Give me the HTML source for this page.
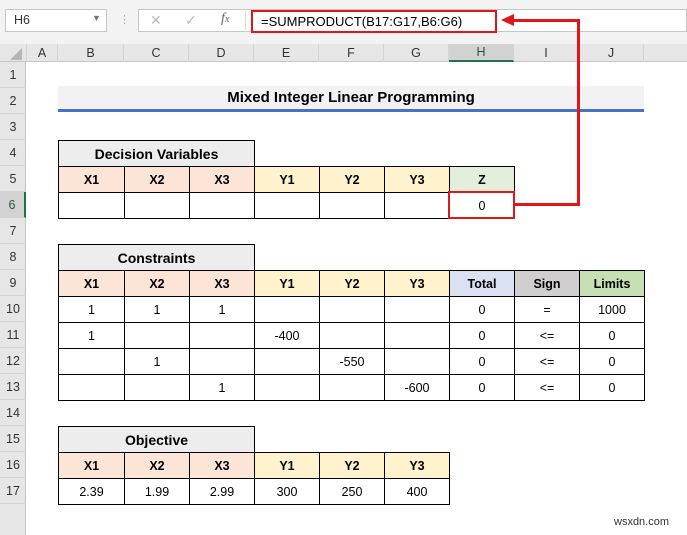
<!DOCTYPE html>
<html><head><meta charset="utf-8"><style>
*{box-sizing:border-box;margin:0;padding:0}
body{width:687px;height:535px;overflow:hidden;background:#fff;font-family:"Liberation Sans",Arial,sans-serif;font-size:12.5px;color:#000;position:relative}
.a{position:absolute}
.c{position:absolute;border:1px solid #000;display:flex;align-items:center;justify-content:center;height:27px}
.b{font-weight:bold}
.ch{position:absolute;top:44px;height:18px;border-right:1px solid #d4d4d4;display:flex;align-items:center;justify-content:center;color:#333;font-size:12.5px}
.rh{position:absolute;left:0;width:26px;height:26px;border-bottom:1px solid #d4d4d4;display:flex;align-items:center;justify-content:center;color:#333;font-size:12.5px}
.x{background:#fce4d6}.y{background:#fff2cc}
</style></head><body>
<!-- toolbar -->
<div class="a" style="left:0;top:0;width:687px;height:44px;background:#f3f3f3"></div>
<div class="a" style="left:5px;top:9px;width:102px;height:23px;background:#fff;border:1px solid #c6c6c6;padding:3px 8px;color:#333">H6</div>
<div class="a" style="left:92px;top:13px;color:#777;font-size:9px">▼</div>
<div class="a" style="left:119px;top:13px;color:#aaa;font-size:11px">⋮</div>
<div class="a" style="left:138px;top:9px;width:549px;height:23px;background:#fff;border:1px solid #c6c6c6"></div>
<div class="a" style="left:150px;top:12px;color:#bbb;font-size:14px">✕</div>
<div class="a" style="left:185px;top:12px;color:#bbb;font-size:14px">✓</div>
<div class="a" style="left:221px;top:11px;color:#666;font-style:italic;font-family:'Liberation Serif',serif;font-size:14px">f<span style="font-size:10px">x</span></div>
<div class="a" style="left:245px;top:9px;width:1px;height:23px;background:#ddd"></div>
<div class="a" style="left:251px;top:10px;width:246px;height:23px;border:2.5px solid #e0161b;padding:2px 8px;font-size:13px">=SUMPRODUCT(B17:G17,B6:G6)</div>
<!-- column headers -->
<div class="a" style="left:0;top:44px;width:687px;height:18px;background:#e6e6e6;border-bottom:1px solid #c6c6c6"></div>
<div class="a" style="left:10px;top:48px;width:0;height:0;border-left:12px solid transparent;border-bottom:12px solid #b5b5b5"></div>
<div class="ch" style="left:26px;width:32px;border-left:1px solid #d4d4d4">A</div>
<div class="ch" style="left:58px;width:66px">B</div>
<div class="ch" style="left:124px;width:65px">C</div>
<div class="ch" style="left:189px;width:65px">D</div>
<div class="ch" style="left:254px;width:65px">E</div>
<div class="ch" style="left:319px;width:65px">F</div>
<div class="ch" style="left:384px;width:65px">G</div>
<div class="ch" style="left:449px;width:65px;background:#d2d2d2;border-bottom:2px solid #217346;color:#1e5c38">H</div>
<div class="ch" style="left:514px;width:65px">I</div>
<div class="ch" style="left:579px;width:65px">J</div>
<!-- row headers -->
<div class="a" style="left:0;top:62px;width:26px;height:473px;background:#e6e6e6;border-right:1px solid #c6c6c6"></div>
<div class="rh" style="top:62px">1</div><div class="rh" style="top:88px">2</div><div class="rh" style="top:114px">3</div><div class="rh" style="top:140px">4</div><div class="rh" style="top:166px">5</div>
<div class="rh" style="top:192px;background:#d2d2d2;border-right:2px solid #217346;color:#1e5c38">6</div>
<div class="rh" style="top:218px">7</div><div class="rh" style="top:244px">8</div><div class="rh" style="top:270px">9</div><div class="rh" style="top:296px">10</div><div class="rh" style="top:322px">11</div><div class="rh" style="top:348px">12</div><div class="rh" style="top:374px">13</div><div class="rh" style="top:400px">14</div><div class="rh" style="top:426px">15</div><div class="rh" style="top:452px">16</div><div class="rh" style="top:478px">17</div>
<!-- title -->
<div class="a b" style="left:58px;top:86px;width:586px;height:26px;background:#f2f2f2;border-bottom:3px solid #4472c4;display:flex;align-items:center;justify-content:center;font-size:15px">Mixed Integer Linear Programming</div>
<!-- Decision vars -->
<div class="c b" style="left:58px;top:140px;width:197px;background:#ededed;font-size:14px">Decision Variables</div>
<div class="c b x" style="left:58px;top:166px;width:67px">X1</div>
<div class="c b x" style="left:124px;top:166px;width:66px">X2</div>
<div class="c b x" style="left:189px;top:166px;width:66px">X3</div>
<div class="c b y" style="left:254px;top:166px;width:66px">Y1</div>
<div class="c b y" style="left:319px;top:166px;width:66px">Y2</div>
<div class="c b y" style="left:384px;top:166px;width:66px">Y3</div>
<div class="c b" style="left:449px;top:166px;width:66px;background:#e2efda">Z</div>
<div class="c" style="left:58px;top:192px;width:67px"></div>
<div class="c" style="left:124px;top:192px;width:66px"></div>
<div class="c" style="left:189px;top:192px;width:66px"></div>
<div class="c" style="left:254px;top:192px;width:66px"></div>
<div class="c" style="left:319px;top:192px;width:66px"></div>
<div class="c" style="left:384px;top:192px;width:66px"></div>
<div class="c" style="left:449px;top:192px;width:66px">0</div>
<div class="a" style="left:448px;top:191px;width:67px;height:28px;border:2.5px solid #e0161b"></div>
<!-- arrow -->
<div class="a" style="left:514px;top:203px;width:66px;height:3px;background:#e0161b"></div>
<div class="a" style="left:577px;top:19px;width:3px;height:187px;background:#e0161b"></div>
<div class="a" style="left:512px;top:19px;width:68px;height:3px;background:#e0161b"></div>
<div class="a" style="left:501px;top:14px;width:0;height:0;border-top:6.5px solid transparent;border-bottom:6.5px solid transparent;border-right:13px solid #e0161b"></div>
<!-- constraints -->
<div class="c b" style="left:58px;top:244px;width:197px;background:#ededed;font-size:14px">Constraints</div>
<div class="c b x" style="left:58px;top:270px;width:67px">X1</div>
<div class="c b x" style="left:124px;top:270px;width:66px">X2</div>
<div class="c b x" style="left:189px;top:270px;width:66px">X3</div>
<div class="c b y" style="left:254px;top:270px;width:66px">Y1</div>
<div class="c b y" style="left:319px;top:270px;width:66px">Y2</div>
<div class="c b y" style="left:384px;top:270px;width:66px">Y3</div>
<div class="c b" style="left:449px;top:270px;width:66px;background:#d9e1f2">Total</div>
<div class="c b" style="left:514px;top:270px;width:66px;background:#d0cece">Sign</div>
<div class="c b" style="left:579px;top:270px;width:66px;background:#c6e0b4">Limits</div>

<div class="c" style="left:58px;top:296px;width:67px">1</div><div class="c" style="left:124px;top:296px;width:66px">1</div><div class="c" style="left:189px;top:296px;width:66px">1</div><div class="c" style="left:254px;top:296px;width:66px"></div><div class="c" style="left:319px;top:296px;width:66px"></div><div class="c" style="left:384px;top:296px;width:66px"></div><div class="c" style="left:449px;top:296px;width:66px">0</div><div class="c" style="left:514px;top:296px;width:66px">=</div><div class="c" style="left:579px;top:296px;width:66px">1000</div>

<div class="c" style="left:58px;top:322px;width:67px">1</div><div class="c" style="left:124px;top:322px;width:66px"></div><div class="c" style="left:189px;top:322px;width:66px"></div><div class="c" style="left:254px;top:322px;width:66px">-400</div><div class="c" style="left:319px;top:322px;width:66px"></div><div class="c" style="left:384px;top:322px;width:66px"></div><div class="c" style="left:449px;top:322px;width:66px">0</div><div class="c" style="left:514px;top:322px;width:66px">&lt;=</div><div class="c" style="left:579px;top:322px;width:66px">0</div>

<div class="c" style="left:58px;top:348px;width:67px"></div><div class="c" style="left:124px;top:348px;width:66px">1</div><div class="c" style="left:189px;top:348px;width:66px"></div><div class="c" style="left:254px;top:348px;width:66px"></div><div class="c" style="left:319px;top:348px;width:66px">-550</div><div class="c" style="left:384px;top:348px;width:66px"></div><div class="c" style="left:449px;top:348px;width:66px">0</div><div class="c" style="left:514px;top:348px;width:66px">&lt;=</div><div class="c" style="left:579px;top:348px;width:66px">0</div>

<div class="c" style="left:58px;top:374px;width:67px"></div><div class="c" style="left:124px;top:374px;width:66px"></div><div class="c" style="left:189px;top:374px;width:66px">1</div><div class="c" style="left:254px;top:374px;width:66px"></div><div class="c" style="left:319px;top:374px;width:66px"></div><div class="c" style="left:384px;top:374px;width:66px">-600</div><div class="c" style="left:449px;top:374px;width:66px">0</div><div class="c" style="left:514px;top:374px;width:66px">&lt;=</div><div class="c" style="left:579px;top:374px;width:66px">0</div>
<!-- objective -->
<div class="c b" style="left:58px;top:426px;width:197px;background:#ededed;font-size:14px">Objective</div>
<div class="c b x" style="left:58px;top:452px;width:67px">X1</div>
<div class="c b x" style="left:124px;top:452px;width:66px">X2</div>
<div class="c b x" style="left:189px;top:452px;width:66px">X3</div>
<div class="c b y" style="left:254px;top:452px;width:66px">Y1</div>
<div class="c b y" style="left:319px;top:452px;width:66px">Y2</div>
<div class="c b y" style="left:384px;top:452px;width:66px">Y3</div>
<div class="c" style="left:58px;top:478px;width:67px">2.39</div>
<div class="c" style="left:124px;top:478px;width:66px">1.99</div>
<div class="c" style="left:189px;top:478px;width:66px">2.99</div>
<div class="c" style="left:254px;top:478px;width:66px">300</div>
<div class="c" style="left:319px;top:478px;width:66px">250</div>
<div class="c" style="left:384px;top:478px;width:66px">400</div>
<div class="a" style="left:614px;top:516px;font-size:11px;color:#333">wsxdn.com</div>
</body></html>
